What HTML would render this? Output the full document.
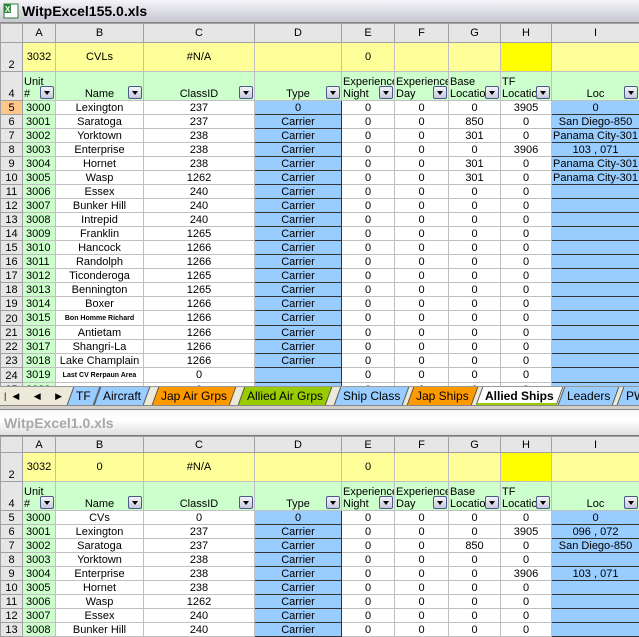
<!DOCTYPE html>
<html><head><meta charset="utf-8"><style>
*{box-sizing:border-box;margin:0;padding:0}
body{width:639px;height:636px;overflow:hidden;background:#fff;font-family:"Liberation Sans",Arial,sans-serif;font-size:11px;color:#000;position:relative}
.title{position:absolute;left:0;width:639px;height:23px;background:linear-gradient(#f4f4f8,#d8d8e0 60%,#c8c8d0);font-weight:bold;font-size:14px;line-height:23px;padding-left:22px;border-bottom:1px solid #888}
.sheet{position:absolute;left:0;width:639px;border-collapse:collapse;table-layout:fixed}
.sheet td{border:1px solid #c0c0c0;padding:0;text-align:center;white-space:nowrap;overflow:hidden;line-height:12px;position:relative}
.sheet tr.h td{background:#e6e6e6;border-color:#a0a0a0;height:19px;font-size:11px}
.sheet tr.h2 td{height:16px}
.sheet tr.r2 td{background:#ffff99;height:29px;font-size:11px}
.sheet tr.r4 td{background:#ccffcc;height:29px;vertical-align:bottom;font-size:11px}
.sheet tr.d td{height:14px}
.sheet td.rh{background:#e6e6e6 !important;border-color:#a0a0a0;vertical-align:bottom;font-size:11px}
.sheet td.sel{background:#ffc68a !important}
.sheet td.u{background:#ccffcc;text-align:left;padding-left:3px}
.sheet td.b{background:#99ccff;border:1px solid #333}
.sheet td.y2{background:#ffff00 !important}
.sm{font-size:7px;font-weight:bold}
.f{position:absolute;right:1px;bottom:1px;width:14px;height:13px;background:linear-gradient(#f4f4fa,#c8c8dc);border:1px solid #4a5a8a;border-radius:2px}
.f:after{content:"";position:absolute;left:3px;top:4px;border-left:3px solid transparent;border-right:3px solid transparent;border-top:4px solid #000}
.sheet td.t4{font-size:10px;line-height:12px;text-align:left;padding-left:1px;vertical-align:bottom}
.tabs{position:absolute;left:0;top:386px;width:639px;height:19px;background:#ece9d8;border-top:1px solid #999;font-size:12px;line-height:18px}
.tab{position:absolute;top:0;height:18px;padding:0 5px;transform:skewX(-20deg);border-left:1px solid #555;border-right:1px solid #555}
.tab span{display:inline-block;transform:skewX(20deg)}
.div{position:absolute;left:0;top:405px;width:639px;height:5px;background:#d4d0c8;border-top:1px solid #888;border-bottom:1px solid #888}
</style></head><body>
<div class="title" style="top:0"><svg style="position:absolute;left:3px;top:3px" width="16" height="16"><rect x="1" y="1" width="14" height="14" fill="#fff" stroke="#2a7a3a"/><rect x="1" y="1" width="7" height="9" fill="#2e8b3e"/><text x="2" y="9" font-size="8" fill="#fff" font-family="Liberation Sans">X</text></svg>WitpExcel155.0.xls</div>

<table class="sheet" style="top:23px">
<colgroup><col style="width:22px"><col style="width:33px"><col style="width:88px"><col style="width:111px"><col style="width:87px"><col style="width:53px"><col style="width:54px"><col style="width:52px"><col style="width:51px"><col style="width:88px"></colgroup>
<tr class="h"><td></td><td>A</td><td>B</td><td>C</td><td>D</td><td>E</td><td>F</td><td>G</td><td>H</td><td>I</td></tr>
<tr class="r2"><td class="rh">2</td><td>3032</td><td>CVLs</td><td>#N/A</td><td></td><td>0</td><td></td><td></td><td class="y2"></td><td></td></tr>
<tr class="r4"><td class="rh">4</td><td class="t4">Unit<br>#<span class="f"></span></td><td>Name<span class="f"></span></td><td>ClassID<span class="f"></span></td><td>Type<span class="f"></span></td><td class="t4">Experience<br>Night<span class="f"></span></td><td class="t4">Experience<br>Day<span class="f"></span></td><td class="t4">Base<br>Locatio<span class="f"></span></td><td class="t4">TF<br>Locatio<span class="f"></span></td><td>Loc<span class="f"></span></td></tr>
<tr class="d"><td class="rh sel">5</td><td class="u">3000</td><td>Lexington</td><td>237</td><td class="b">0</td><td>0</td><td>0</td><td>0</td><td>3905</td><td class="b">0</td></tr>
<tr class="d"><td class="rh">6</td><td class="u">3001</td><td>Saratoga</td><td>237</td><td class="b">Carrier</td><td>0</td><td>0</td><td>850</td><td>0</td><td class="b">San Diego-850</td></tr>
<tr class="d"><td class="rh">7</td><td class="u">3002</td><td>Yorktown</td><td>238</td><td class="b">Carrier</td><td>0</td><td>0</td><td>301</td><td>0</td><td class="b">Panama City-301</td></tr>
<tr class="d"><td class="rh">8</td><td class="u">3003</td><td>Enterprise</td><td>238</td><td class="b">Carrier</td><td>0</td><td>0</td><td>0</td><td>3906</td><td class="b">103 , 071</td></tr>
<tr class="d"><td class="rh">9</td><td class="u">3004</td><td>Hornet</td><td>238</td><td class="b">Carrier</td><td>0</td><td>0</td><td>301</td><td>0</td><td class="b">Panama City-301</td></tr>
<tr class="d"><td class="rh">10</td><td class="u">3005</td><td>Wasp</td><td>1262</td><td class="b">Carrier</td><td>0</td><td>0</td><td>301</td><td>0</td><td class="b">Panama City-301</td></tr>
<tr class="d"><td class="rh">11</td><td class="u">3006</td><td>Essex</td><td>240</td><td class="b">Carrier</td><td>0</td><td>0</td><td>0</td><td>0</td><td class="b"></td></tr>
<tr class="d"><td class="rh">12</td><td class="u">3007</td><td>Bunker Hill</td><td>240</td><td class="b">Carrier</td><td>0</td><td>0</td><td>0</td><td>0</td><td class="b"></td></tr>
<tr class="d"><td class="rh">13</td><td class="u">3008</td><td>Intrepid</td><td>240</td><td class="b">Carrier</td><td>0</td><td>0</td><td>0</td><td>0</td><td class="b"></td></tr>
<tr class="d"><td class="rh">14</td><td class="u">3009</td><td>Franklin</td><td>1265</td><td class="b">Carrier</td><td>0</td><td>0</td><td>0</td><td>0</td><td class="b"></td></tr>
<tr class="d"><td class="rh">15</td><td class="u">3010</td><td>Hancock</td><td>1266</td><td class="b">Carrier</td><td>0</td><td>0</td><td>0</td><td>0</td><td class="b"></td></tr>
<tr class="d"><td class="rh">16</td><td class="u">3011</td><td>Randolph</td><td>1266</td><td class="b">Carrier</td><td>0</td><td>0</td><td>0</td><td>0</td><td class="b"></td></tr>
<tr class="d"><td class="rh">17</td><td class="u">3012</td><td>Ticonderoga</td><td>1265</td><td class="b">Carrier</td><td>0</td><td>0</td><td>0</td><td>0</td><td class="b"></td></tr>
<tr class="d"><td class="rh">18</td><td class="u">3013</td><td>Bennington</td><td>1265</td><td class="b">Carrier</td><td>0</td><td>0</td><td>0</td><td>0</td><td class="b"></td></tr>
<tr class="d"><td class="rh">19</td><td class="u">3014</td><td>Boxer</td><td>1266</td><td class="b">Carrier</td><td>0</td><td>0</td><td>0</td><td>0</td><td class="b"></td></tr>
<tr class="d"><td class="rh">20</td><td class="u">3015</td><td><span class="sm">Bon Homme Richard</span></td><td>1266</td><td class="b">Carrier</td><td>0</td><td>0</td><td>0</td><td>0</td><td class="b"></td></tr>
<tr class="d"><td class="rh">21</td><td class="u">3016</td><td>Antietam</td><td>1266</td><td class="b">Carrier</td><td>0</td><td>0</td><td>0</td><td>0</td><td class="b"></td></tr>
<tr class="d"><td class="rh">22</td><td class="u">3017</td><td>Shangri-La</td><td>1266</td><td class="b">Carrier</td><td>0</td><td>0</td><td>0</td><td>0</td><td class="b"></td></tr>
<tr class="d"><td class="rh">23</td><td class="u">3018</td><td>Lake Champlain</td><td>1266</td><td class="b">Carrier</td><td>0</td><td>0</td><td>0</td><td>0</td><td class="b"></td></tr>
<tr class="d"><td class="rh">24</td><td class="u">3019</td><td><span class="sm">Last CV Rerpaun Area</span></td><td>0</td><td class="b"></td><td>0</td><td>0</td><td>0</td><td>0</td><td class="b"></td></tr>
<tr class="d"><td class="rh">25</td><td class="u">3020</td><td></td><td>0</td><td class="b"></td><td>0</td><td>0</td><td>0</td><td>0</td><td class="b"></td></tr>
</table>

<div class="tabs">
<span style="position:absolute;left:4px;top:0;font-size:9px;letter-spacing:6px">|◀ ◀ ▶ ▶|</span>
<div class="tab" style="left:70px;background:#99ccff"><span>TF</span></div>
<div class="tab" style="left:97px;background:#99ccff"><span>Aircraft</span></div>
<div class="tab" style="left:155px;background:#ff9900"><span>Jap Air Grps</span></div>
<div class="tab" style="left:241px;background:#99cc00"><span>Allied Air Grps</span></div>
<div class="tab" style="left:337px;background:#99ccff"><span>Ship Class</span></div>
<div class="tab" style="left:410px;background:#ff9900"><span>Jap Ships</span></div>
<div class="tab" style="left:479px;background:#fff;font-weight:bold;border-bottom:2px solid #99cc00"><span>Allied Ships</span></div>
<div class="tab" style="left:561px;background:#99ccff"><span>Leaders</span></div>
<div class="tab" style="left:620px;background:#99ccff"><span>PW</span></div>
</div>
<div class="div"></div>
<div class="title" style="top:410px;height:26px;line-height:26px;padding-left:4px;color:#a8a8a8;background:linear-gradient(#f8f8f8,#fff 40%,#e0e0e4);border-bottom:1px solid #777">WitpExcel1.0.xls</div>

<table class="sheet" style="top:436px">
<colgroup><col style="width:22px"><col style="width:33px"><col style="width:88px"><col style="width:111px"><col style="width:87px"><col style="width:53px"><col style="width:54px"><col style="width:52px"><col style="width:51px"><col style="width:88px"></colgroup>
<tr class="h h2"><td></td><td>A</td><td>B</td><td>C</td><td>D</td><td>E</td><td>F</td><td>G</td><td>H</td><td>I</td></tr>
<tr class="r2"><td class="rh">2</td><td>3032</td><td>0</td><td>#N/A</td><td></td><td>0</td><td></td><td></td><td class="y2"></td><td></td></tr>
<tr class="r4"><td class="rh">4</td><td class="t4">Unit<br>#<span class="f"></span></td><td>Name<span class="f"></span></td><td>ClassID<span class="f"></span></td><td>Type<span class="f"></span></td><td class="t4">Experience<br>Night<span class="f"></span></td><td class="t4">Experience<br>Day<span class="f"></span></td><td class="t4">Base<br>Locatio<span class="f"></span></td><td class="t4">TF<br>Locatio<span class="f"></span></td><td>Loc<span class="f"></span></td></tr>
<tr class="d"><td class="rh">5</td><td class="u">3000</td><td>CVs</td><td>0</td><td class="b">0</td><td>0</td><td>0</td><td>0</td><td>0</td><td class="b">0</td></tr>
<tr class="d"><td class="rh">6</td><td class="u">3001</td><td>Lexington</td><td>237</td><td class="b">Carrier</td><td>0</td><td>0</td><td>0</td><td>3905</td><td class="b">096 , 072</td></tr>
<tr class="d"><td class="rh">7</td><td class="u">3002</td><td>Saratoga</td><td>237</td><td class="b">Carrier</td><td>0</td><td>0</td><td>850</td><td>0</td><td class="b">San Diego-850</td></tr>
<tr class="d"><td class="rh">8</td><td class="u">3003</td><td>Yorktown</td><td>238</td><td class="b">Carrier</td><td>0</td><td>0</td><td>0</td><td>0</td><td class="b"></td></tr>
<tr class="d"><td class="rh">9</td><td class="u">3004</td><td>Enterprise</td><td>238</td><td class="b">Carrier</td><td>0</td><td>0</td><td>0</td><td>3906</td><td class="b">103 , 071</td></tr>
<tr class="d"><td class="rh">10</td><td class="u">3005</td><td>Hornet</td><td>238</td><td class="b">Carrier</td><td>0</td><td>0</td><td>0</td><td>0</td><td class="b"></td></tr>
<tr class="d"><td class="rh">11</td><td class="u">3006</td><td>Wasp</td><td>1262</td><td class="b">Carrier</td><td>0</td><td>0</td><td>0</td><td>0</td><td class="b"></td></tr>
<tr class="d"><td class="rh">12</td><td class="u">3007</td><td>Essex</td><td>240</td><td class="b">Carrier</td><td>0</td><td>0</td><td>0</td><td>0</td><td class="b"></td></tr>
<tr class="d"><td class="rh">13</td><td class="u">3008</td><td>Bunker Hill</td><td>240</td><td class="b">Carrier</td><td>0</td><td>0</td><td>0</td><td>0</td><td class="b"></td></tr>
</table>
</body></html>
